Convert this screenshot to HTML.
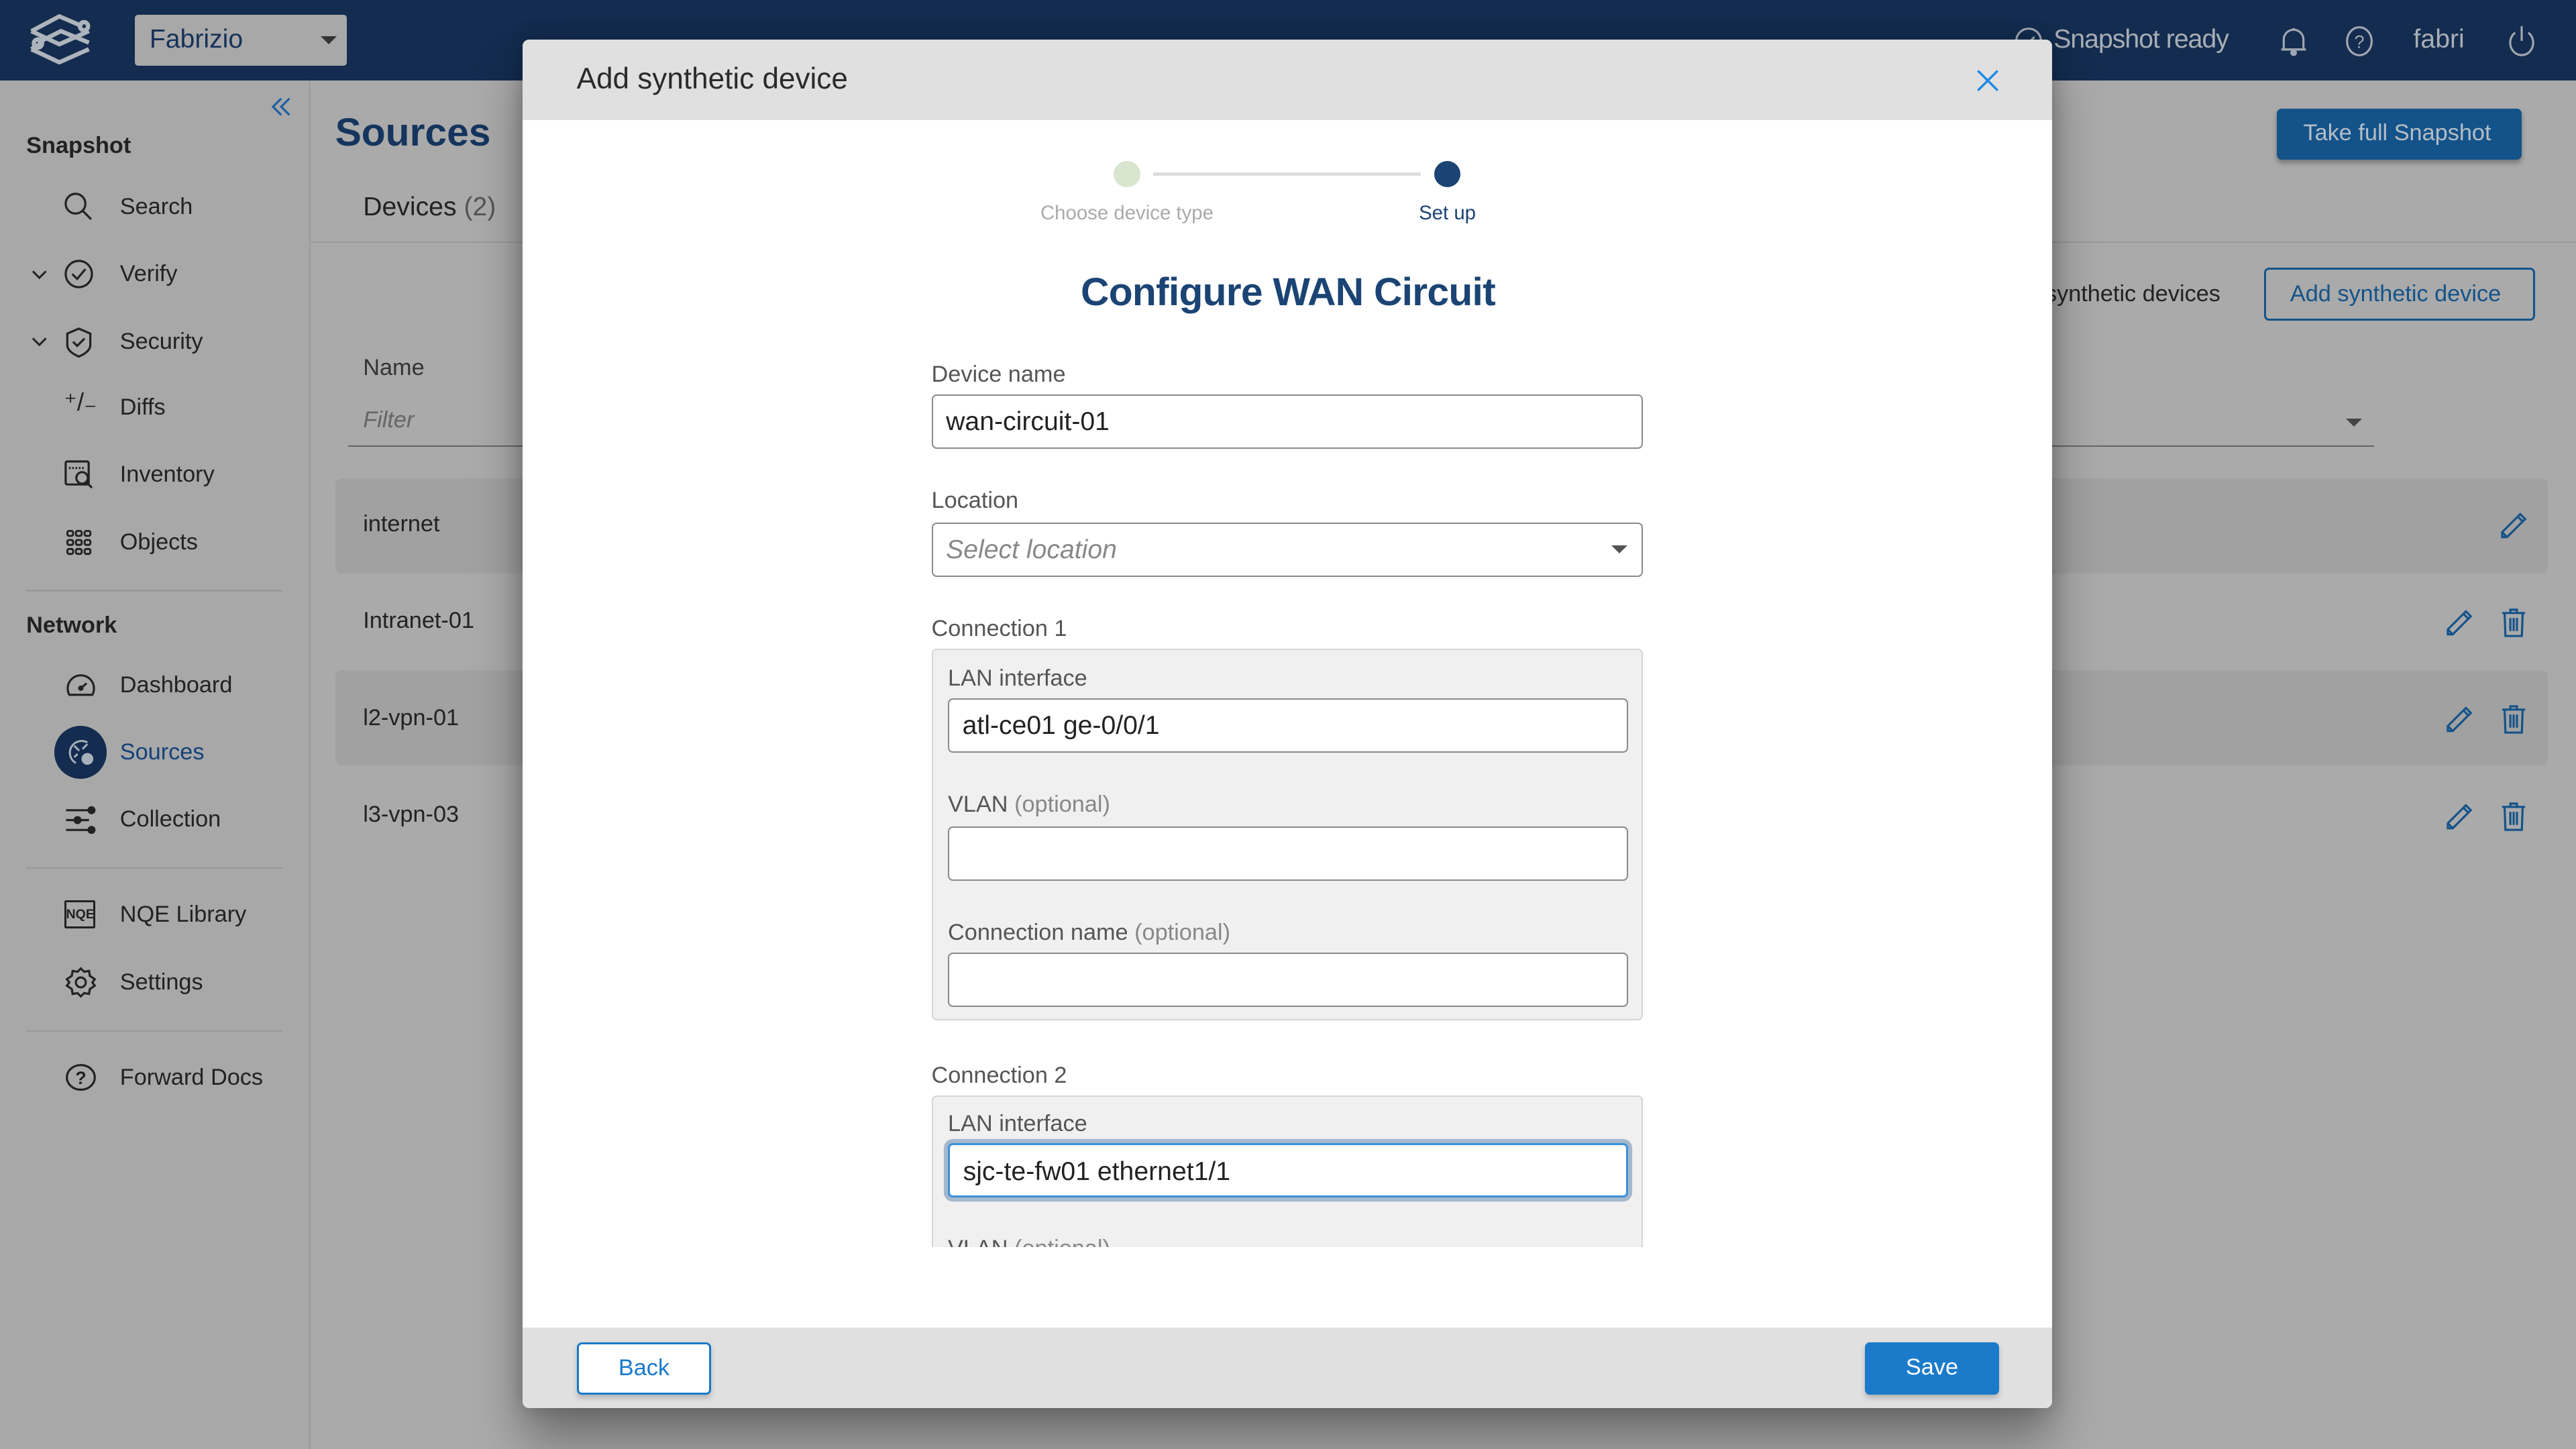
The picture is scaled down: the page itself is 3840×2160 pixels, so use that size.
<!DOCTYPE html>
<html><head><meta charset="utf-8"><style>
*{box-sizing:border-box;margin:0;padding:0}
html,body{width:3840px;height:2160px;overflow:hidden;background:#a9a9a9}
#r{position:absolute;left:0;top:0;width:1568px;height:882px;zoom:2.44898;font-family:"Liberation Sans",sans-serif;background:#aaaaaa;overflow:hidden}
.a{position:absolute;white-space:nowrap}
.hdr{left:0;top:0;width:1568px;height:49px;background:#132c4f}
.side{left:0;top:49px;width:189px;height:833px;background:#a8a8a8;border-right:1px solid #9a9a9a}
.nav{font-size:14px;color:#222;}
.sec{font-size:14px;font-weight:bold;color:#222}
.div{height:1px;background:#999;left:16px;width:156px}
.ic{width:20px;height:20px}
.row{background:#a1a1a1;border-radius:4px;left:204px;width:1347px;height:58px}
.rt{font-size:14px;color:#222}
.modal{left:318px;top:24px;width:931px;height:833px;background:#fff;border-radius:4px;box-shadow:0 20px 30px rgba(0,0,0,.35),0 0 12px rgba(0,0,0,.2);overflow:hidden}
.lbl{font-size:14px;color:#555}
.inp{background:#fff;border:1px solid #8a8a8a;border-radius:3px;height:33px;font-size:16px;color:#222;padding:7px 8px}
.opt{color:#888}
</style></head><body><div id="r">
<div class="a hdr"></div>
<svg class="a" style="left:15px;top:7px" width="44" height="34" viewBox="0 0 44 34" fill="none" stroke="#aeb4bc" stroke-width="2.6"><path d="M4 12 L21 3 L35 9"/><path d="M4 12 L21 20 L39 12"/><path d="M8 19 L22 12 L39 19"/><path d="M4 23 L21 31 L39 23"/><path d="M4 23 L9 20"/><circle cx="36" cy="9" r="2.5"/><circle cx="8" cy="19.5" r="2.5"/></svg>
<div class="a" style="left:82px;top:9px;width:129px;height:31px;background:#a8a8a8;border-radius:2px"></div>
<div class="a" style="left:91px;top:15px;font-size:16px;color:#163259">Fabrizio</div>
<div class="a" style="left:195px;top:22px;width:0;height:0;border-left:5px solid transparent;border-right:5px solid transparent;border-top:5px solid #333"></div>
<svg class="a" style="left:1226px;top:16px" width="18" height="18" viewBox="0 0 18 18" fill="none" stroke="#9fa6b0" stroke-width="1.3"><circle cx="9" cy="9" r="7.5"/><path d="M5.5 9 L8 11.5 L12.5 6.5"/></svg>
<div class="a" style="left:1250px;top:15px;font-size:16px;color:#a9aeb5;letter-spacing:-.4px">Snapshot ready</div>
<svg class="a" style="left:1387px;top:15px" width="18" height="20" viewBox="0 0 18 20" fill="none" stroke="#9fa6b0" stroke-width="1.3"><path d="M3 15 L3 9 A6 6 0 0 1 15 9 L15 15 Z"/><path d="M1.5 15 L16.5 15"/><circle cx="9" cy="17" r="1.4" fill="#9fa6b0"/><path d="M9 2 L9 3"/></svg>
<svg class="a" style="left:1427px;top:15px" width="18" height="20" viewBox="0 0 18 20" fill="none" stroke="#9fa6b0" stroke-width="1.3"><ellipse cx="9" cy="10" rx="7.5" ry="8.5"/><text x="9" y="14" font-size="11" text-anchor="middle" fill="#9fa6b0" stroke="none" font-family="Liberation Sans">?</text></svg>
<div class="a" style="left:1469px;top:15px;font-size:16px;color:#a9aeb5">fabri</div>
<svg class="a" style="left:1526px;top:14px" width="18" height="22" viewBox="0 0 18 22" fill="none" stroke="#9fa6b0" stroke-width="1.3"><path d="M5 6 A7 7.5 0 1 0 13 6"/><path d="M9 2 L9 11"/></svg>

<div class="a side"></div>
<svg class="a" style="left:164px;top:58px" width="14" height="14" viewBox="0 0 14 14" fill="none" stroke="#1d5fa3" stroke-width="1.3"><path d="M7 2 L2 7 L7 12"/><path d="M12 2 L7 7 L12 12"/></svg>
<div class="a sec" style="left:16px;top:81px">Snapshot</div>
<svg class="a" style="left:38px;top:116px" width="20" height="20" viewBox="0 0 20 20" fill="none" stroke="#222" stroke-width="1.3"><circle cx="8" cy="8" r="6"/><path d="M12.5 12.5 L17.5 17.5"/></svg>
<div class="a nav" style="left:73px;top:118px">Search</div>
<svg class="a" style="left:18px;top:162px" width="12" height="10" viewBox="0 0 12 10" fill="none" stroke="#222" stroke-width="1.2"><path d="M2 3 L6 7 L10 3"/></svg>
<svg class="a" style="left:38px;top:157px" width="20" height="20" viewBox="0 0 20 20" fill="none" stroke="#222" stroke-width="1.3"><circle cx="10" cy="10" r="8"/><path d="M6 10 L9 13 L14 7"/></svg>
<div class="a nav" style="left:73px;top:159px">Verify</div>
<svg class="a" style="left:18px;top:203px" width="12" height="10" viewBox="0 0 12 10" fill="none" stroke="#222" stroke-width="1.2"><path d="M2 3 L6 7 L10 3"/></svg>
<svg class="a" style="left:38px;top:198px" width="20" height="20" viewBox="0 0 20 20" fill="none" stroke="#222" stroke-width="1.3"><path d="M10 2 L17 5 L17 12 Q17 16 10 19 Q3 16 3 12 L3 5 Z"/><path d="M6.5 10 L9 12.5 L13.5 8"/></svg>
<div class="a nav" style="left:73px;top:200px">Security</div>
<div class="a" style="left:39px;top:236px;font-size:15px;color:#222">⁺/₋</div>
<div class="a nav" style="left:73px;top:240px">Diffs</div>
<svg class="a" style="left:38px;top:279px" width="20" height="20" viewBox="0 0 20 20" fill="none" stroke="#222" stroke-width="1.3"><rect x="2" y="2" width="14" height="14" rx="1"/><path d="M4 6 L14 6" stroke-dasharray="1 1"/><circle cx="12" cy="12" r="3.5" fill="#a8a8a8"/><path d="M14.5 14.5 L18 18"/></svg>
<div class="a nav" style="left:73px;top:281px">Inventory</div>
<svg class="a" style="left:40px;top:322px" width="16" height="16" viewBox="0 0 16 16" fill="none" stroke="#222" stroke-width="1.2"><rect x="1" y="1" width="3.5" height="3" rx="1"/><rect x="6.2" y="1" width="3.5" height="3" rx="1"/><rect x="11.5" y="1" width="3.5" height="3" rx="1"/><rect x="1" y="6.5" width="3.5" height="3" rx="1"/><rect x="6.2" y="6.5" width="3.5" height="3" rx="1"/><rect x="11.5" y="6.5" width="3.5" height="3" rx="1"/><rect x="1" y="12" width="3.5" height="3" rx="1"/><rect x="6.2" y="12" width="3.5" height="3" rx="1"/><rect x="11.5" y="12" width="3.5" height="3" rx="1"/></svg>
<div class="a nav" style="left:73px;top:322px">Objects</div>
<div class="a div" style="top:359px"></div>
<div class="a sec" style="left:16px;top:373px">Network</div>
<svg class="a" style="left:39px;top:408px" width="20" height="18" viewBox="0 0 20 18" fill="none" stroke="#222" stroke-width="1.3"><path d="M3 15 A8 8 0 1 1 17 15 Z"/><path d="M10 11 L13.5 8"/><circle cx="10" cy="11" r="1" fill="#222"/></svg>
<div class="a nav" style="left:73px;top:409px">Dashboard</div>
<div class="a" style="left:33px;top:442px;width:32px;height:32px;border-radius:50%;background:#132c4f"></div>
<svg class="a" style="left:39px;top:448px" width="20" height="20" viewBox="0 0 20 20" fill="none" stroke="#a8b0bb" stroke-width="1.2"><path d="M14 4 A7 7 0 1 0 7 16.5"/><path d="M6 6 L9 9 M11 8 L14 5 M6 13 L8 11"/><circle cx="14" cy="14" r="3" fill="#a8b0bb"/></svg>
<div class="a nav" style="left:73px;top:450px;color:#16427a">Sources</div>
<svg class="a" style="left:39px;top:489px" width="20" height="20" viewBox="0 0 20 20" fill="none" stroke="#222" stroke-width="1.3"><path d="M1 4 L15 4 M1 10 L15 10 M1 16 L15 16"/><circle cx="16.5" cy="4" r="1.8" fill="#222"/><circle cx="8" cy="10" r="1.8" fill="#222"/><circle cx="16.5" cy="16" r="1.8" fill="#222"/></svg>
<div class="a nav" style="left:73px;top:491px">Collection</div>
<div class="a div" style="top:528px"></div>
<div class="a" style="left:39px;top:548px;width:19px;height:17px;border:1.3px solid #222;border-radius:1px;font-size:8px;font-weight:bold;color:#222;text-align:center;line-height:15px">NQE</div>
<div class="a nav" style="left:73px;top:549px">NQE Library</div>
<svg class="a" style="left:39px;top:588px" width="20" height="20" viewBox="0 0 20 20" fill="none" stroke="#222" stroke-width="1.3"><path d="M10 1.5 L12 3.5 L15 3 L15.5 6 L18.5 8 L17 10 L18.5 12 L15.5 14 L15 17 L12 16.5 L10 18.5 L8 16.5 L5 17 L4.5 14 L1.5 12 L3 10 L1.5 8 L4.5 6 L5 3 L8 3.5 Z"/><circle cx="10" cy="10" r="3"/></svg>
<div class="a nav" style="left:73px;top:590px">Settings</div>
<div class="a div" style="top:627px"></div>
<svg class="a" style="left:39px;top:647px" width="20" height="18" viewBox="0 0 20 18" fill="none" stroke="#222" stroke-width="1.3"><ellipse cx="10" cy="9" rx="8.5" ry="7.5"/><text x="10" y="13" font-size="11" font-weight="bold" text-anchor="middle" fill="#222" stroke="none" font-family="Liberation Sans">?</text></svg>
<div class="a nav" style="left:73px;top:648px">Forward Docs</div>

<div class="a" style="left:204px;top:67px;font-size:24px;font-weight:bold;color:#15355e">Sources</div>
<div class="a" style="left:221px;top:117px;font-size:16px;color:#222">Devices <span style="color:#555">(2)</span></div>
<div class="a" style="left:189px;top:147px;width:1379px;height:1px;background:#999"></div>
<div class="a" style="left:1386px;top:66px;width:149px;height:31px;background:#14538a;border-radius:3px;box-shadow:0 2px 3px rgba(0,0,0,.3)"></div>
<div class="a" style="left:1402px;top:73px;font-size:14px;color:#b5bdc6">Take full Snapshot</div>
<div class="a" style="left:1245px;top:171px;font-size:14px;color:#222">synthetic devices</div>
<div class="a" style="left:1378px;top:163px;width:165px;height:32px;border:1.3px solid #14538a;border-radius:3px"></div>
<div class="a" style="left:1394px;top:171px;font-size:14px;color:#14538a">Add synthetic device</div>
<div class="a" style="left:221px;top:216px;font-size:14px;color:#333">Name</div>
<div class="a" style="left:221px;top:248px;font-size:14px;color:#666;font-style:italic">Filter</div>
<div class="a" style="left:212px;top:271px;width:1233px;height:1px;background:#666"></div>
<div class="a" style="left:1428px;top:255px;border-left:5px solid transparent;border-right:5px solid transparent;border-top:5px solid #444"></div>
<div class="a row" style="top:291px"></div>
<div class="a row" style="top:408px"></div>
<div class="a rt" style="left:221px;top:311px">internet</div>
<div class="a rt" style="left:221px;top:370px">Intranet-01</div>
<div class="a rt" style="left:221px;top:429px">l2-vpn-01</div>
<div class="a rt" style="left:221px;top:488px">l3-vpn-03</div>
<svg width="0" height="0" style="position:absolute"><defs>
<g id="pen" fill="none" stroke="#14538a" stroke-width="1.3"><path d="M2 17 L2 14 L13 3 L16 6 L5 17 Z"/><path d="M11.5 4.5 L14.5 7.5 M2 14 L5 17"/></g>
<g id="bin" fill="none" stroke="#14538a" stroke-width="1.3"><path d="M2 4 L16 4 M7 4 L7 2 L11 2 L11 4"/><path d="M3.5 4 L4 18 L14 18 L14.5 4"/><path d="M7 7 L7 15 M9 7 L9 15 M11 7 L11 15"/></g></defs></svg>
<svg class="a" style="left:1521px;top:310px" width="18" height="19"><use href="#pen"/></svg>
<svg class="a" style="left:1488px;top:369px" width="18" height="19"><use href="#pen"/></svg>
<svg class="a" style="left:1521px;top:369px" width="18" height="19"><use href="#bin"/></svg>
<svg class="a" style="left:1488px;top:428px" width="18" height="19"><use href="#pen"/></svg>
<svg class="a" style="left:1521px;top:428px" width="18" height="19"><use href="#bin"/></svg>
<svg class="a" style="left:1488px;top:487px" width="18" height="19"><use href="#pen"/></svg>
<svg class="a" style="left:1521px;top:487px" width="18" height="19"><use href="#bin"/></svg>

<div class="a modal">
 <div class="a" style="left:0;top:0;width:931px;height:49px;background:#e0e0e0"></div>
 <div class="a" style="left:33px;top:14px;font-size:18px;color:#2b2b2b">Add synthetic device</div>
 <svg class="a" style="left:885px;top:18px" width="14" height="14" viewBox="0 0 14 14" stroke="#1e88e5" stroke-width="1.4"><path d="M1 1 L13 13 M13 1 L1 13"/></svg>
 <div class="a" style="left:360px;top:74px;width:16px;height:16px;border-radius:50%;background:#d8e5cf"></div>
 <div class="a" style="left:384px;top:81px;width:163px;height:2px;background:#ddd"></div>
 <div class="a" style="left:555px;top:74px;width:16px;height:16px;border-radius:50%;background:#1b4474"></div>
 <div class="a" style="left:268px;top:99px;width:200px;text-align:center;font-size:12px;color:#aaa">Choose device type</div>
 <div class="a" style="left:463px;top:99px;width:200px;text-align:center;font-size:12px;color:#1b4474">Set up</div>
 <div class="a" style="left:216px;top:140px;width:500px;text-align:center;font-size:24px;font-weight:bold;color:#1b4474;letter-spacing:-.3px">Configure WAN Circuit</div>
 <div class="a" style="left:0;top:735px;width:931px;height:49px;background:#fff"></div>
 <div class="a" style="left:249px;top:196px;width:434px;height:539px;overflow:hidden">
  <div class="a lbl" style="left:0;top:0">Device name</div>
  <div class="a inp" style="left:0;top:20px;width:433px">wan-circuit-01</div>
  <div class="a lbl" style="left:0;top:77px">Location</div>
  <div class="a inp" style="left:0;top:98px;width:433px;color:#888;font-style:italic">Select location</div>
  <div class="a" style="left:414px;top:112px;border-left:5px solid transparent;border-right:5px solid transparent;border-top:5px solid #555"></div>
  <div class="a lbl" style="left:0;top:155px">Connection 1</div>
  <div class="a" style="left:0;top:175px;width:433px;height:226px;background:#f0f0f0;border:1px solid #d6d6d6;border-radius:3px"></div>
  <div class="a lbl" style="left:10px;top:185px">LAN interface</div>
  <div class="a inp" style="left:10px;top:205px;width:414px">atl-ce01 ge-0/0/1</div>
  <div class="a lbl" style="left:10px;top:262px">VLAN <span class="opt">(optional)</span></div>
  <div class="a inp" style="left:10px;top:283px;width:414px"></div>
  <div class="a lbl" style="left:10px;top:340px">Connection name <span class="opt">(optional)</span></div>
  <div class="a inp" style="left:10px;top:360px;width:414px"></div>
  <div class="a lbl" style="left:0;top:427px">Connection 2</div>
  <div class="a" style="left:0;top:447px;width:433px;height:200px;background:#f0f0f0;border:1px solid #d6d6d6;border-radius:3px"></div>
  <div class="a lbl" style="left:10px;top:456px">LAN interface</div>
  <div class="a inp" style="left:10px;top:476px;width:414px;border:1.5px solid #3b8fd6;box-shadow:0 0 0 2.5px #a5b8cc">sjc-te-fw01 ethernet1/1</div>
  <div class="a lbl" style="left:10px;top:532px">VLAN <span class="opt">(optional)</span></div>
 </div>
 <div class="a" style="left:0;top:784px;width:931px;height:49px;background:#e0e0e0"></div>
 <div class="a" style="left:33px;top:793px;width:82px;height:32px;background:#fff;border:1.3px solid #1a7acb;border-radius:3px;font-size:14px;color:#1a7acb;text-align:center;line-height:29px;box-shadow:0 2px 3px rgba(0,0,0,.2)">Back</div>
 <div class="a" style="left:817px;top:793px;width:82px;height:32px;background:#1b7bca;border-radius:3px;font-size:14px;color:#fff;text-align:center;line-height:31px;box-shadow:0 2px 3px rgba(0,0,0,.2)">Save</div>
</div>
</div></body></html>
